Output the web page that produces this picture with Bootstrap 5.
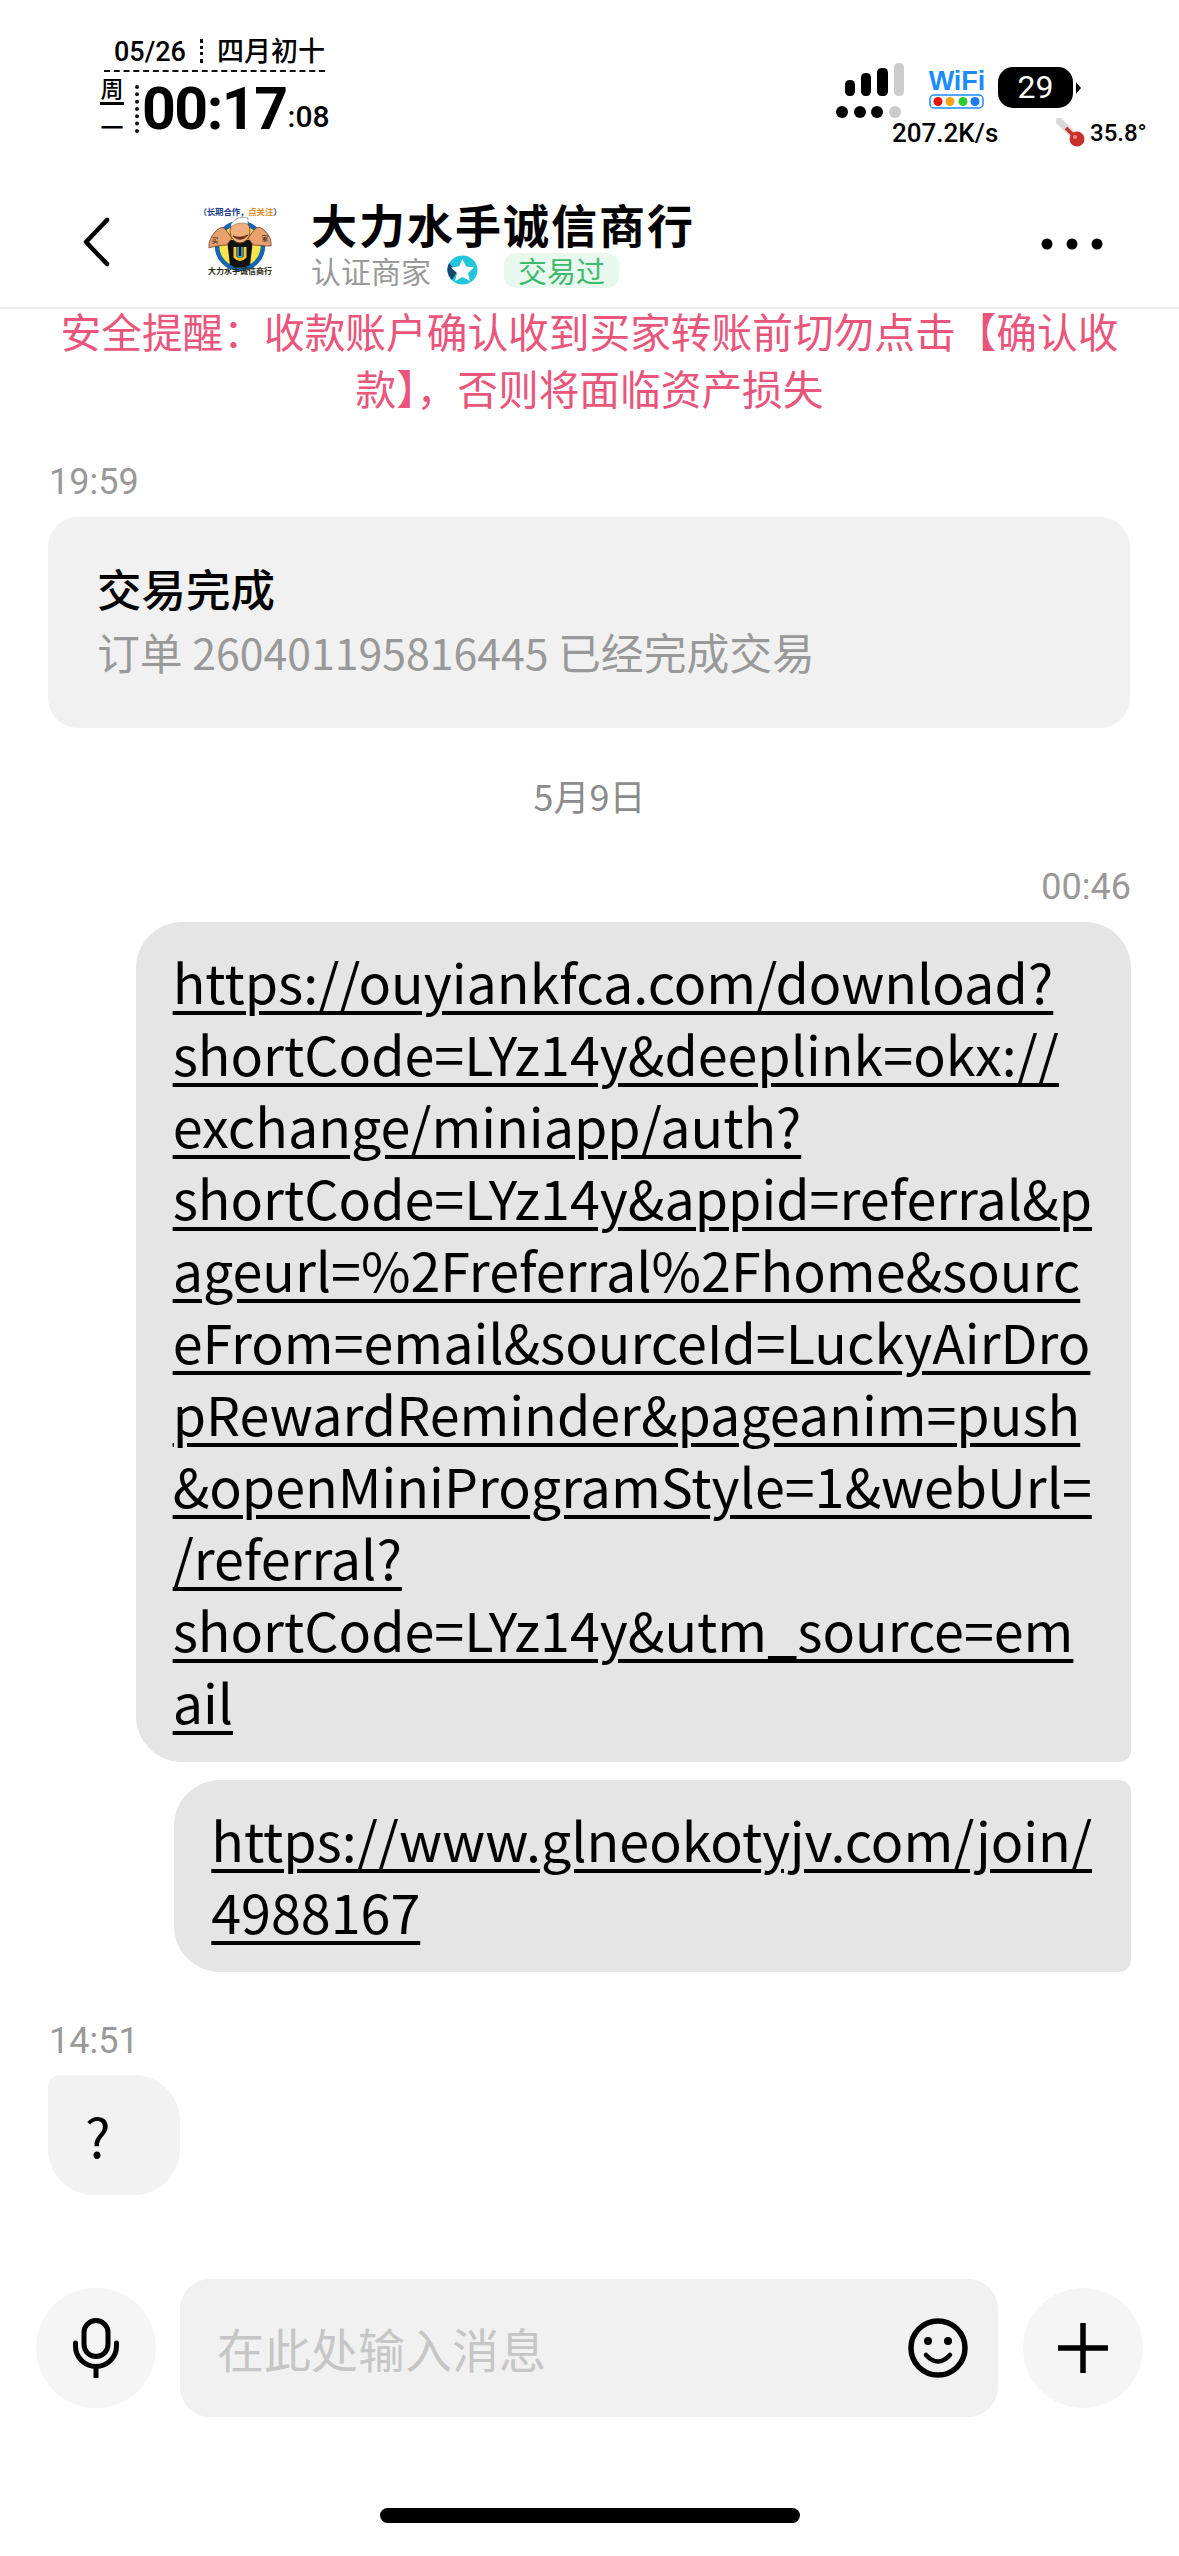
<!DOCTYPE html>
<html lang="zh-CN">
<head>
    <meta charset="UTF-8">
    <meta name="viewport" content="width=device-width, initial-scale=1.0">
    <title>大力水手诚信商行</title>
    <link href="https://cdn.jsdelivr.net/npm/bootstrap@5.3.0/dist/css/bootstrap.min.css" rel="stylesheet">
    <style>
        html, body {
            margin: 0;
            background: #fff;
            color: #000;
        }
        body {
            font-family: "Noto Sans CJK SC", "Noto Sans", sans-serif;
        }
        .screen {
            width: 1179px;
            height: 2556px;
            overflow: hidden;
        }

        /* status bar */
        .status-strip {
            height: 170px;
            font-family: "Roboto", "Noto Sans CJK SC", sans-serif;
        }
        .clock-side {
            margin-left: 100px;
            padding-top: 36px;
            width: 240px;
        }
        .date-row {
            width: 221px;
            margin-left: 4px;
            height: 36px;
            border-bottom: 2.5px dashed #111;
            font-size: 27px;
            line-height: 32px;
            padding-left: 10px;
            font-weight: 500;
        }
        .dot-sep {
            border-left: 3px dotted #111;
            height: 24px;
            margin: 3px 14px 0 14px;
        }
        .week-col {
            width: 24px;
            font-size: 23px;
            line-height: 23px;
            text-align: center;
            font-weight: 500;
            margin-top: 1px;
        }
        .week-col hr {
            margin: 1px 0 12px 0;
            border-top: 3px solid #000;
            opacity: 1;
        }
        .week-sep {
            border-left: 4px dotted #111;
            height: 48px;
            margin: 0 3px 0 11px;
        }
        .time-main {
            font-size: 59px;
            line-height: 52px;
            font-weight: 700;
            letter-spacing: -1.5px;
        }
        .time-sec {
            font-size: 30px;
            line-height: 30px;
            font-weight: 500;
            margin: 0 0 8px 1px;
            align-self: flex-end;
        }
        .clock-row {
            margin-top: 5px;
        }
        .sys-side {
            margin-right: 32px;
            padding-top: 63px;
            width: 312px;
        }
        .signal-mark {
            margin-left: 1px;
        }
        .wifi-mark {
            margin-left: 21px;
            margin-top: 6px;
        }
        .power-pill {
            width: 75px;
            height: 41px;
            margin-left: 13px;
            margin-top: 4px;
            border-radius: 15px;
            background: #000;
            color: #fff;
            font-size: 32px;
            line-height: 41px;
            text-align: center;
            font-weight: 400;
        }
        .power-nub {
            width: 0;
            height: 0;
            margin-top: 19px;
            margin-left: 3px;
            border-top: 6px solid transparent;
            border-bottom: 6px solid transparent;
            border-left: 5px solid #000;
        }
        .speed-row {
            margin-top: -2px;
            font-size: 26px;
            line-height: 30px;
            font-weight: 500;
            padding-left: 57px;
        }
        .heat-txt {
            font-size: 24px;
            margin-left: 4px;
        }
        .speed-txt {
            width: 164px;
        }

        /* chat header */
        .chat-head {
            height: 139px;
            padding-top: 6px;
            border-bottom: 2px solid #ececec;
        }
        .back-btn {
            margin-left: 82px;
            width: 108px;
        }
        .head-text {
            margin-left: 21px;
        }
        .head-name {
            font-size: 46px;
            line-height: 56px;
            font-weight: 700;
            letter-spacing: 2px;
        }
        .head-sub {
            font-size: 30px;
            line-height: 36px;
            color: #9a9a9a;
            margin-top: 1px;
        }
        .deal-tag {
            background: #e8f8ee;
            color: #3fb96f;
            font-size: 29px;
            font-weight: 400;
            line-height: 35px;
            padding: 0 14px;
            border-radius: 12px;
            margin-left: 26px;
        }
        .more-btn {
            margin-left: auto;
            margin-right: 76px;
        }
        .safe-note {
            margin-top: -7px;
            position: relative;
            padding: 0 30px;
            font-size: 40.7px;
            line-height: 57px;
            color: #e9557b;
            text-align: center;
        }

        /* messages */
        .time-tag {
            font-family: "Roboto", sans-serif;
            font-size: 36px;
            line-height: 40px;
            color: #999;
        }
        .deal-card {
            margin: 15px 49px 0 48px;
            height: 211px;
            background: #f1f1f1;
            border-radius: 30px;
            padding: 41px 50px 0 49px;
        }
        .deal-title {
            font-size: 44.5px;
            line-height: 60px;
            font-weight: 500;
        }
        .deal-info {
            font-size: 42.8px;
            line-height: 62px;
            color: #999;
            margin-top: 2px;
        }
        .day-tag {
            font-size: 36px;
            line-height: 44px;
            color: #8c8c8c;
            text-align: center;
            margin-top: 45px;
        }
        .bubble-mine {
            align-self: flex-end;
            margin-right: 48px;
            background: #e5e5e5;
            padding: 23px 39px 25px 37px;
            border-radius: 46px 46px 12px 46px;
            font-size: 53.8px;
            line-height: 72px;
            white-space: nowrap;
        }
        .bubble-mine a {
            color: #000;
            text-decoration-thickness: 3.5px;
            text-underline-offset: 7px;
        }
        .bubble-next {
            margin-top: 18px;
            border-radius: 46px 12px 12px 46px;
        }
        .bubble-other {
            width: 132px;
            height: 120px;
            margin: 14px 0 0 48px;
            padding-left: 37px;
            font-size: 54px;
            line-height: 120px;
            background: #f2f2f2;
            border-radius: 12px 46px 46px 46px;
        }

        /* input bar */
        .input-strip {
            padding: 0 36px;
        }
        .round-btn {
            width: 120px;
            height: 120px;
            flex: none;
            border-radius: 50%;
            background: #f5f5f5;
        }
        .msg-box {
            width: 818px;
            height: 138px;
            flex: none;
            margin: 0 25px 0 24px;
            background: #f1f1f1;
            border-radius: 30px;
            padding: 0 30px 0 37px;
        }
        .msg-box input {
            background: transparent;
            border: 0;
            box-shadow: none;
            padding: 0;
            font-size: 47px;
        }
        .msg-box input::placeholder {
            color: #c6c6c6;
        }
        .home-bar {
            width: 420px;
            height: 15px;
            margin: 91px auto 0 auto;
            background: #000;
            border-radius: 8px;
        }
    </style>
</head>
<body>
<div class="screen d-flex flex-column">

    <!-- status bar -->
    <div class="status-strip d-flex justify-content-between">
        <div class="clock-side">
            <div class="date-row d-flex">
                <span>05/26</span><span class="dot-sep"></span><span>四月初十</span>
            </div>
            <div class="clock-row d-flex align-items-center">
                <div class="week-col">周<hr>一</div>
                <div class="week-sep"></div>
                <div class="time-main">00:17</div>
                <div class="time-sec">:08</div>
            </div>
        </div>
        <div class="sys-side">
            <div class="d-flex">
                <svg class="signal-mark" width="72" height="57" viewBox="0 0 72 57">
                    <rect x="9" y="17" width="10" height="16" rx="4.5" fill="#000"/>
                    <rect x="25" y="10" width="10" height="23" rx="4.5" fill="#000"/>
                    <rect x="41" y="5" width="11" height="28" rx="4.5" fill="#000"/>
                    <rect x="58" y="0" width="10" height="33" rx="4.5" fill="#ccc"/>
                    <circle cx="6" cy="49" r="6" fill="#000"/>
                    <circle cx="24" cy="49" r="6" fill="#000"/>
                    <circle cx="41" cy="49" r="6" fill="#000"/>
                    <circle cx="59" cy="49" r="6" fill="#ccc"/>
                </svg>
                <svg class="wifi-mark" width="56" height="40" viewBox="0 0 56 40">
                    <text x="28" y="21" text-anchor="middle" font-family="Liberation Sans" font-weight="700" font-size="27" fill="#1a8cff">WiFi</text>
                    <rect x="1" y="26" width="53" height="13" rx="4" fill="none" stroke="#1a8cff" stroke-width="1.5"/>
                    <circle cx="9" cy="32.5" r="4.5" fill="#f01010"/>
                    <circle cx="21" cy="32.5" r="4.5" fill="#f5a314"/>
                    <circle cx="34" cy="32.5" r="4.5" fill="#2ecc2e"/>
                    <circle cx="46" cy="32.5" r="4.5" fill="#1a7cf0"/>
                </svg>
                <div class="power-pill">29</div>
                <div class="power-nub"></div>
            </div>
            <div class="speed-row d-flex align-items-center">
                <span class="speed-txt">207.2K/s</span>
                <svg width="30" height="30" viewBox="0 0 30 30">
                    <path d="M3 3 L18 18" stroke="#d8d8d8" stroke-width="7" stroke-linecap="round"/>
                    <path d="M10 10 L20 20" stroke="#c9302c" stroke-width="3.5"/>
                    <circle cx="21" cy="21" r="7.5" fill="#c9302c"/>
                    <circle cx="19" cy="19" r="2" fill="#ee8a85"/>
                </svg>
                <span class="heat-txt">35.8°</span>
            </div>
        </div>
    </div>

    <!-- header -->
    <div class="chat-head d-flex align-items-center">
        <div class="back-btn">
            <svg width="28" height="50" viewBox="0 0 28 50">
                <path d="M25 3 L4 25 L25 47" fill="none" stroke="#000" stroke-width="4.5" stroke-linecap="round" stroke-linejoin="round"/>
            </svg>
        </div>
        <svg class="flex-shrink-0" width="100" height="95" viewBox="0 0 100 95">
            <text x="50" y="21" text-anchor="middle" font-size="8.5" font-weight="700" fill="#1f3f8f" letter-spacing="-.2">（长期合作，<tspan fill="#e78a1c">点关注</tspan>）</text>
            <circle cx="50" cy="52" r="23" fill="#f8e54a" stroke="#1565b4" stroke-width="4.5"/>
            <path d="M37 46 H63 L60 71 Q50 76 40 71 Z" fill="#111"/>
            <path d="M37 51 Q24 52 19 54 Q18 46 25 38 Q32 30 36 36 L42 44 Z" fill="#e8a06e" stroke="#5b2c14" stroke-width=".7"/>
            <path d="M63 51 Q76 52 81 52 Q82 44 75 37 Q68 30 64 36 L58 44 Z" fill="#e8a06e" stroke="#5b2c14" stroke-width=".7"/>
            <ellipse cx="50" cy="37" rx="10" ry="12" fill="#f0ae7c" stroke="#5b2c14" stroke-width=".7"/>
            <path d="M41 30 Q47 21 58 24 L58 30 Q48 27 41 33 Z" fill="#fff" stroke="#777" stroke-width=".6"/>
            <path d="M43 42 Q50 49 58 41 Q50 45 43 42" fill="#a42020" stroke="#5b2c14" stroke-width="1"/>
            <path d="M45 53 V63 Q50 68 55 63 V53" fill="none" stroke="#f5c32e" stroke-width="3"/>
            <path d="M48 53 V62 Q50 64 52 62 V53" fill="none" stroke="#3fb6e8" stroke-width="1.5"/>
            <text x="25" y="49" text-anchor="middle" font-size="7" fill="#222">买</text>
            <text x="75" y="47" text-anchor="middle" font-size="7" fill="#222">家</text>
            <text x="50" y="80" text-anchor="middle" font-size="8" font-weight="700" fill="#2b2a10">大力水手诚信商行</text>
        </svg>
        <div class="head-text">
            <div class="head-name">大力水手诚信商行</div>
            <div class="head-sub d-flex align-items-center">
                <span>认证商家</span>
                <svg class="ms-3" width="31" height="30" viewBox="0 0 31 30">
                    <ellipse cx="15.5" cy="15" rx="15" ry="14.5" fill="#24c4d9"/>
                    <path d="M2 8 A15 14.5 0 0 0 5 25 L10 17 Z" fill="#16486b"/>
                    <path d="M15.5 4 L19 11.5 L27 12.5 L21 18 L22.8 26 L15.5 22 L8.2 26 L10 18 L4 12.5 L12 11.5 Z" fill="#fff"/>
                </svg>
                <span class="badge deal-tag">交易过</span>
            </div>
        </div>
        <div class="more-btn">
            <svg width="62" height="12" viewBox="0 0 62 12">
                <circle cx="6" cy="6" r="5.5" fill="#000"/>
                <circle cx="31" cy="6" r="5.5" fill="#000"/>
                <circle cx="56" cy="6" r="5.5" fill="#000"/>
            </svg>
        </div>
    </div>

    <div class="safe-note">安全提醒：收款账户确认收到买家转账前切勿点击【确认收款】，否则将面临资产损失</div>

    <!-- messages -->
    <div class="d-flex flex-column">
        <div class="time-tag" style="margin: 46px 0 0 49px">19:59</div>
        <div class="card border-0 deal-card">
            <div class="deal-title">交易完成</div>
            <div class="deal-info">订单 260401195816445 已经完成交易</div>
        </div>
        <div class="day-tag">5月9日</div>
        <div class="time-tag align-self-end" style="margin: 50px 48px 0 0">00:46</div>
        <div class="bubble-mine" style="margin-top: 15px">
            <a href="#">https://ouyiankfca.com/download?<br>shortCode=LYz14y&amp;deeplink=okx://<br>exchange/miniapp/auth?<br>shortCode=LYz14y&amp;appid=referral&amp;p<br>ageurl=%2Freferral%2Fhome&amp;sourc<br>eFrom=email&amp;sourceId=LuckyAirDro<br>pRewardReminder&amp;pageanim=push<br>&amp;openMiniProgramStyle=1&amp;webUrl=<br>/referral?<br>shortCode=LYz14y&amp;utm_source=em<br>ail</a>
        </div>
        <div class="bubble-mine bubble-next">
            <a href="#">https://www.glneokotyjv.com/join/<br>4988167</a>
        </div>
        <div class="time-tag" style="margin: 49px 0 0 49px">14:51</div>
        <div class="bubble-other">?</div>
    </div>

    <!-- input -->
    <div class="input-strip d-flex align-items-center" style="margin-top: 84px">
        <div class="round-btn d-flex align-items-center justify-content-center">
            <svg width="46" height="60" viewBox="0 0 46 60">
                <rect x="11" y="2.5" width="24" height="36" rx="12" fill="none" stroke="#000" stroke-width="5"/>
                <path d="M2.5 25 V28 A20.5 20.5 0 0 0 43.5 28 V25" fill="none" stroke="#000" stroke-width="5" stroke-linecap="round"/>
                <path d="M23 48 V60" stroke="#000" stroke-width="5"/>
            </svg>
        </div>
        <div class="msg-box d-flex align-items-center">
            <input class="form-control" type="text" placeholder="在此处输入消息">
            <svg class="flex-shrink-0" width="60" height="60" viewBox="0 0 60 60">
                <circle cx="30" cy="30" r="27" fill="none" stroke="#000" stroke-width="5.5"/>
                <circle cx="20" cy="23" r="4" fill="#000"/>
                <circle cx="40" cy="23" r="4" fill="#000"/>
                <path d="M18 37 Q30 50 42 37" fill="none" stroke="#000" stroke-width="4.5" stroke-linecap="round"/>
            </svg>
        </div>
        <div class="round-btn d-flex align-items-center justify-content-center">
            <svg width="50" height="50" viewBox="0 0 50 50">
                <path d="M25 1 V49 M1 25 H49" stroke="#000" stroke-width="5.5" stroke-linecap="round"/>
            </svg>
        </div>
    </div>
    <div class="home-bar"></div>
</div>
<script src="https://cdn.jsdelivr.net/npm/bootstrap@5.3.0/dist/js/bootstrap.bundle.min.js"></script>
</body>
</html>
